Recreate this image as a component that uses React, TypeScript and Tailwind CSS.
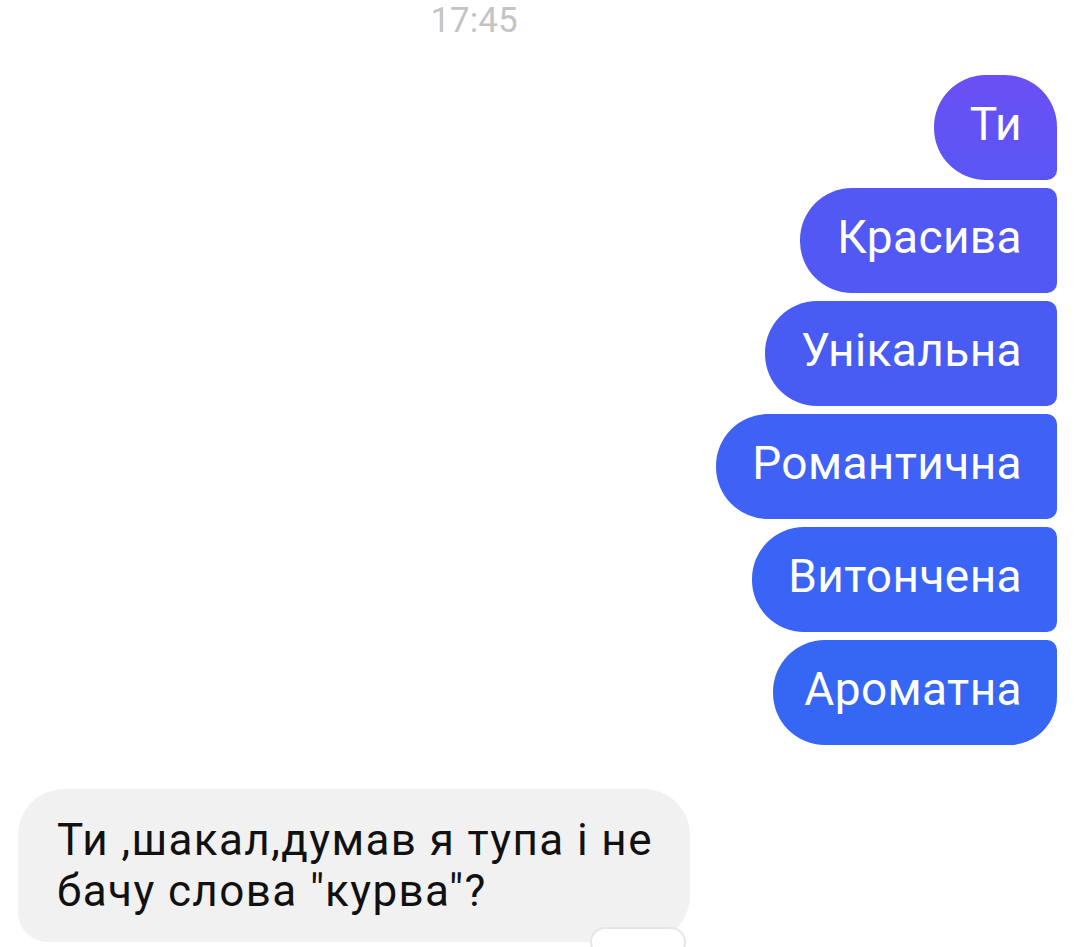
const messages = [
  { text: 'Ти', cls: 'pl-[36px] bg-gradient-to-b from-[#6b4ff4] to-[#5956f4] rounded-[52px] rounded-br-[10px]' },
  { text: 'Красива', cls: 'pl-[37px] bg-[#5158f3] rounded-l-[52px] rounded-r-[10px]' },
  { text: 'Унікальна', cls: 'pl-[36px] bg-[#485cf4] rounded-l-[52px] rounded-r-[10px]' },
  { text: 'Романтична', cls: 'pl-[36px] bg-[#3f61f5] rounded-l-[52px] rounded-r-[10px]' },
  { text: 'Витончена', cls: 'pl-[36px] bg-[#3a64f5] rounded-l-[52px] rounded-r-[10px]' },
  { text: 'Ароматна', cls: 'pl-[31px] bg-[#3566f4] rounded-l-[52px] rounded-tr-[10px] rounded-br-[48px]' },
];

const App = () => {
  return (
    <div className="h-[947px] w-[1080px] overflow-hidden bg-white font-['Roboto',sans-serif]">
      {/* Time */}
      <div className="pr-[132px] pt-[1px] text-center text-[35px] leading-[40px] text-[#c4c4c4]">17:45</div>

      {/* Outgoing */}
      <div className="mt-[34px] flex flex-col items-end gap-[8px] pr-[23px]">
        {messages.map((m) => (
          <div
            key={m.text}
            className={`flex h-[105px] items-center justify-end pb-[6px] pr-[35px] text-[46px] tracking-[0.4px] text-white ${m.cls}`}
          >
            {m.text}
          </div>
        ))}
      </div>

      {/* Incoming */}
      <div className="relative ml-[18px] mt-[44px] w-[672px]">
        <div className="h-[153px] rounded-[46px] rounded-bl-[30px] bg-[#f1f1f1] pl-[39px] pr-[10px] pt-[26px] text-[44px] leading-[51px] tracking-[1.4px] text-[#111111]">
          Ти ,шакал,думав я тупа і не
          <br />
          бачу слова "курва"?
        </div>
        <div className="absolute left-[572px] top-[138px] h-[30px] w-[96px] rounded-full border-2 border-[#e6e6e6] bg-white" />
      </div>
    </div>
  );
};

export default App;
